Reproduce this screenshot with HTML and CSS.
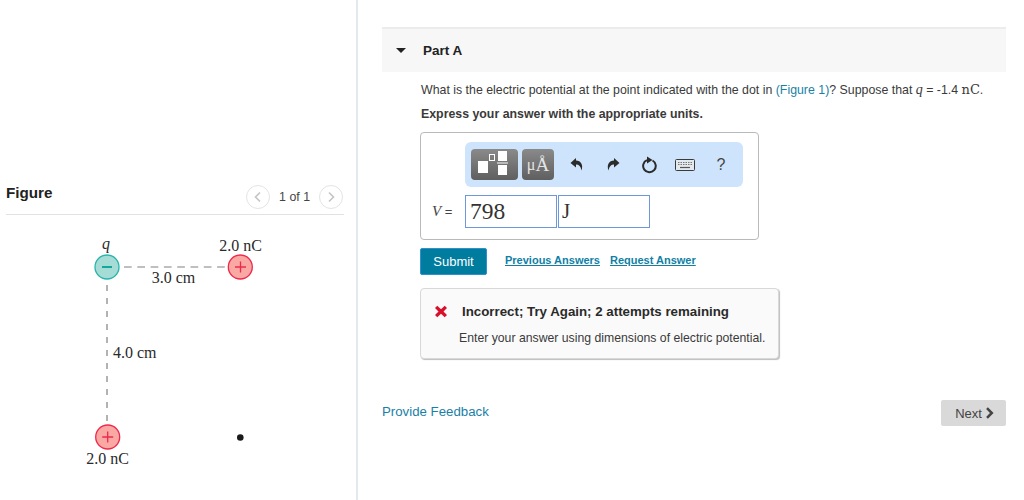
FILE: index.html
```html
<!DOCTYPE html>
<html lang="en">
<head>
<meta charset="utf-8">
<title>Part A</title>
<link rel="stylesheet" href="styles.css">
</head>
<body>
<div class="page">
  <aside class="figure-pane">
    <div class="figure-head">
      <h2 class="figure-title">Figure</h2>
      <div class="pager">
        <span class="pager-btn"><svg width="10" height="12" viewBox="0 0 10 12"><path d="M7 1.500 2.500 6 7 10.500" class="chev"/></svg></span>
        <span class="pager-text">1 of 1</span>
        <span class="pager-btn"><svg width="10" height="12" viewBox="0 0 10 12"><path d="M3 1.500 7.500 6 3 10.500" class="chev"/></svg></span>
      </div>
    </div>
    <svg class="diagram" width="344" height="270" viewBox="0 0 344 270">
      <line x1="124" y1="52" x2="226" y2="52" class="dash-h"/>
      <line x1="107" y1="70" x2="107" y2="208" class="dash-v"/>
      <circle cx="107" cy="52" r="12" class="neg"/>
      <path d="M102 52h10" class="neg-sign"/>
      <circle cx="240.300" cy="52" r="12" class="pos"/>
      <path d="M235 52h11M240.500 46.500v11" class="pos-sign"/>
      <circle cx="107.700" cy="222" r="12" class="pos"/>
      <path d="M102.200 222h11M107.700 216.500v11" class="pos-sign"/>
      <circle cx="240.300" cy="222.500" r="3.300" class="dot"/>
      <text x="106" y="34" class="dia-text italic" text-anchor="middle">q</text>
      <text x="240.500" y="36" class="dia-text" text-anchor="middle">2.0 nC</text>
      <text x="173.500" y="67.500" class="dia-text" text-anchor="middle">3.0 cm</text>
      <text x="113" y="142.500" class="dia-text">4.0 cm</text>
      <text x="107.700" y="248.500" class="dia-text" text-anchor="middle">2.0 nC</text>
    </svg>
  </aside>
  <main class="main-pane">
    <header class="part-head">
      <svg class="caret" width="10" height="5" viewBox="0 0 10 5"><path d="M0 0h10L5 5z"/></svg>
      <h1 class="part-title">Part A</h1>
    </header>
    <div class="part-body">
      <p class="question">What is the electric potential at the point indicated with the dot in <a class="link-plain">(Figure 1)</a>? Suppose that <i class="math">q</i> = -1.4 <span class="math-unit">nC</span>.</p>
      <p class="instruction">Express your answer with the appropriate units.</p>
      <div class="answer-box">
        <div class="toolbar">
          <span class="tool-btn tool-wide">
            <svg width="47" height="31" viewBox="0 0 47 31"><path d="M7 12h10v12H7zM27 2h9v10h-9zM27 16h9v10h-9z" class="white"/><rect x="18.500" y="5.500" width="5" height="6" class="outline"/><path d="M26 14h11" class="rule"/></svg>
          </span>
          <span class="tool-btn tool-unit"><span class="unit-mu">μ</span>Å</span>
          <span class="tool-icons">
            <span class="tool-cell"><svg width="14" height="15" viewBox="0 0 14 15"><path d="M6 1 .5 6 6 10.500V7.600c3 0 4.800 1.900 5.500 5.900C13.500 8 11 3.800 6 3.600z" class="ink"/></svg></span>
            <span class="tool-cell"><svg width="14" height="15" viewBox="0 0 14 15"><path d="M8 1l5.500 5L8 10.500V7.600c-3 0-4.800 1.900-5.500 5.900C.5 8 3 3.800 8 3.600z" class="ink"/></svg></span>
            <span class="tool-cell reload"><svg width="16" height="18" viewBox="0 0 16 18"><path d="M10.500 4.500A6.300 6.300 0 1 1 5 4.200" class="ring"/><path d="M5 .5l5.500 3.500L5 7.500z" class="ink"/></svg></span>
            <span class="tool-cell"><svg width="20" height="12" viewBox="0 0 20 12"><rect x=".5" y=".5" width="19" height="11" rx="1" class="kb"/><path d="M3 3.500h14M3 5.500h14" class="kb-keys"/><path d="M5 8.500h10" class="kb-bar"/></svg></span>
            <span class="tool-cell help">?</span>
          </span>
        </div>
        <div class="input-row">
          <span class="var-label"><i class="var-name">V</i> =</span>
          <span class="field">798</span>
          <span class="field field-unit">J</span>
        </div>
      </div>
      <div class="actions">
        <button class="submit" type="button">Submit</button>
        <a class="action-link">Previous Answers</a>
        <a class="action-link">Request Answer</a>
      </div>
      <div class="feedback">
        <div class="feedback-title">
          <svg width="14" height="13" viewBox="0 0 14 13"><path d="M1 3 3.300.8 7 4.200 10.700.8 13 3 9.500 6.500 13 10l-2.300 2.200L7 8.800l-3.700 3.400L1 10l3.500-3.500z" class="cross"/></svg>
          <strong>Incorrect; Try Again; 2 attempts remaining</strong>
        </div>
        <p class="feedback-text">Enter your answer using dimensions of electric potential.</p>
      </div>
    </div>
    <footer class="foot">
      <a class="feedback-link">Provide Feedback</a>
      <button class="next" type="button">Next <svg width="9" height="12" viewBox="0 0 9 12"><path d="M2 1.200 6.800 6 2 10.800" class="next-chev"/></svg></button>
    </footer>
  </main>
</div>
</body>
</html>
```
FILE: styles.css
```css
* { box-sizing: border-box; }
html, body { margin: 0; height: 100%; background: #fff; overflow: hidden; }
body { font-family: "Liberation Sans", Arial, sans-serif; color: #333; font-size: 12.35px; }
.page { display: flex; height: 500px; }

.figure-pane { width: 358px; border-right: 2px solid #e4e9ef; padding-top: 183px; flex: none; }
.figure-head { display: flex; justify-content: space-between; align-items: center; width: 338px; margin-left: 6px; height: 32px; border-bottom: 1px solid #e2e2e2; padding-bottom: 4px; }
.figure-title { margin: 0 0 8px; font-size: 15.2px; font-weight: bold; color: #222; }
.pager { display: flex; align-items: center; gap: 9px; margin-right: 1px; }
.pager-btn { width: 24px; height: 24px; border: 1px solid #e4e4e4; border-radius: 50%; display: flex; align-items: center; justify-content: center; }
.pager-text { font-size: 12.35px; color: #444; }
.chev { fill: none; stroke: #c4c4c4; stroke-width: 1.6; }
.diagram { display: block; }
.dash-h { stroke: #aaa; stroke-width: 1.3; stroke-dasharray: 7.7 5.6; }
.dash-v { stroke: #666; stroke-width: 1; stroke-dasharray: 6 7; }
.neg { fill: #a6dcd6; stroke: #27b5ac; stroke-width: 1.3; }
.neg-sign { stroke: #14a79c; stroke-width: 2; fill: none; }
.pos { fill: #faa8a3; stroke: #ee2a4c; stroke-width: 1.3; }
.pos-sign { stroke: #ee2a4c; stroke-width: 1.3; fill: none; }
.dot { fill: #1a1a1a; }
.dia-text { font-family: "Liberation Serif", serif; font-size: 16px; fill: #2a2a2a; }
.italic { font-style: italic; }

.main-pane { flex: 1; padding: 27px 18px 0 24px; min-width: 0; }
.part-head { height: 45px; background: #f7f7f7; border-top: 2px solid #ececec; display: flex; align-items: center; }
.caret { margin-left: 14px; }
.caret path { fill: #222; }
.part-title { margin: 0 0 0 17px; font-size: 13.5px; font-weight: bold; color: #222; }
.part-body { padding-left: 38px; }
.question { margin: 10px 0 0 1px; line-height: 16px; white-space: nowrap; height: 16px; color: #3a3a3a; }
.link-plain { color: #1a7fa6; }
.math { font-family: "Liberation Serif", serif; font-size: 14px; font-weight: normal; }
.math-unit { font-family: "DejaVu Serif", serif; font-size: 13px; }
.instruction { margin: 8px 0 0 1px; font-weight: bold; line-height: 16px; color: #3a3a3a; }
.answer-box { width: 339px; height: 108px; margin-top: 10px; border: 1px solid #b9b9b9; border-radius: 4px; padding: 9px 0 0 44px; }
.toolbar { width: 278px; height: 45px; background: #cee4fc; border-radius: 6px; display: flex; align-items: center; padding-left: 6px; }
.tool-btn { height: 31px; border-radius: 4px; background: linear-gradient(#8a8a8a, #5f5f5f); display: flex; align-items: center; justify-content: center; }
.tool-wide { width: 47px; }
.tool-unit { width: 32px; margin-left: 4px; color: #e4e4e4; font-family: "Liberation Serif", serif; font-size: 19px; }
.unit-mu { font-size: 16px; }
.white { fill: #fff; }
.outline { fill: none; stroke: #fff; stroke-width: 1; }
.rule { stroke: #fff; stroke-width: 1; }
.tool-icons { display: flex; align-items: center; margin-left: 5px; }
.tool-cell { width: 36px; display: flex; justify-content: center; align-items: center; }
.reload { padding-left: 2px; }
.ink { fill: #2b2b2b; }
.ring { fill: none; stroke: #2b2b2b; stroke-width: 2; }
.kb { fill: #e4e9ee; stroke: #3a3a3a; stroke-width: 1; }
.kb-keys { stroke: #777; stroke-width: 1; stroke-dasharray: 1.5 1; }
.kb-bar { stroke: #555; stroke-width: 1.2; }
.help { font-size: 16px; color: #444; }
.input-row { display: flex; align-items: center; margin: 8px 0 0 -33px; }
.var-label { width: 33px; font-size: 13px; color: #444; font-family: "Liberation Sans", Arial, sans-serif; white-space: nowrap; }
.var-name { font-family: "Liberation Serif", serif; font-size: 15px; }
.field { width: 92px; height: 33px; border: 1px solid #6f97dc; font-family: "Liberation Serif", serif; font-size: 23.5px; line-height: 31px; padding-left: 4px; color: #333; }
.field-unit { margin-left: 1px; font-size: 21px; padding-left: 3px; }
.actions { display: flex; align-items: flex-start; margin-top: 8px; }
.submit { width: 67px; height: 27px; background: #007c9e; border: 1px solid #2f8fd0; border-radius: 2px; color: #fff; font: 13px "Liberation Sans", Arial, sans-serif; padding: 0; }
.action-link { color: #0f7fa5; font-weight: bold; font-size: 11px; text-decoration: underline; margin-left: 10px; line-height: 13px; margin-top: 6px; }
.submit + .action-link { margin-left: 18px; }
.feedback { width: 359px; height: 71px; margin-top: 13px; background: #fafafa; border: 1px solid #d8d8d8; border-radius: 4px; box-shadow: 1px 1px 1px #bdbdbd; padding: 14px 0 0 13px; }
.feedback-title { display: flex; align-items: center; gap: 14px; height: 16px; font-size: 13.3px; color: #2a2a2a; }
.cross { fill: #d9102c; }
.feedback-text { margin: 11px 0 0 25px; line-height: 16px; color: #3a3a3a; white-space: nowrap; font-size: 12.25px; }
.foot { display: flex; justify-content: space-between; align-items: flex-start; margin-top: 41px; }
.feedback-link { color: #1a7fa6; font-size: 13.25px; line-height: 15px; margin-top: 4px; }
.next { width: 65px; height: 26px; background: #d9d9d9; border: none; border-radius: 2px; color: #444; font: 13px "Liberation Sans", Arial, sans-serif; padding: 0 0 0 2px; display: flex; align-items: center; justify-content: center; gap: 3px; }
.next-chev { fill: none; stroke: #444; stroke-width: 2.5; }
```
